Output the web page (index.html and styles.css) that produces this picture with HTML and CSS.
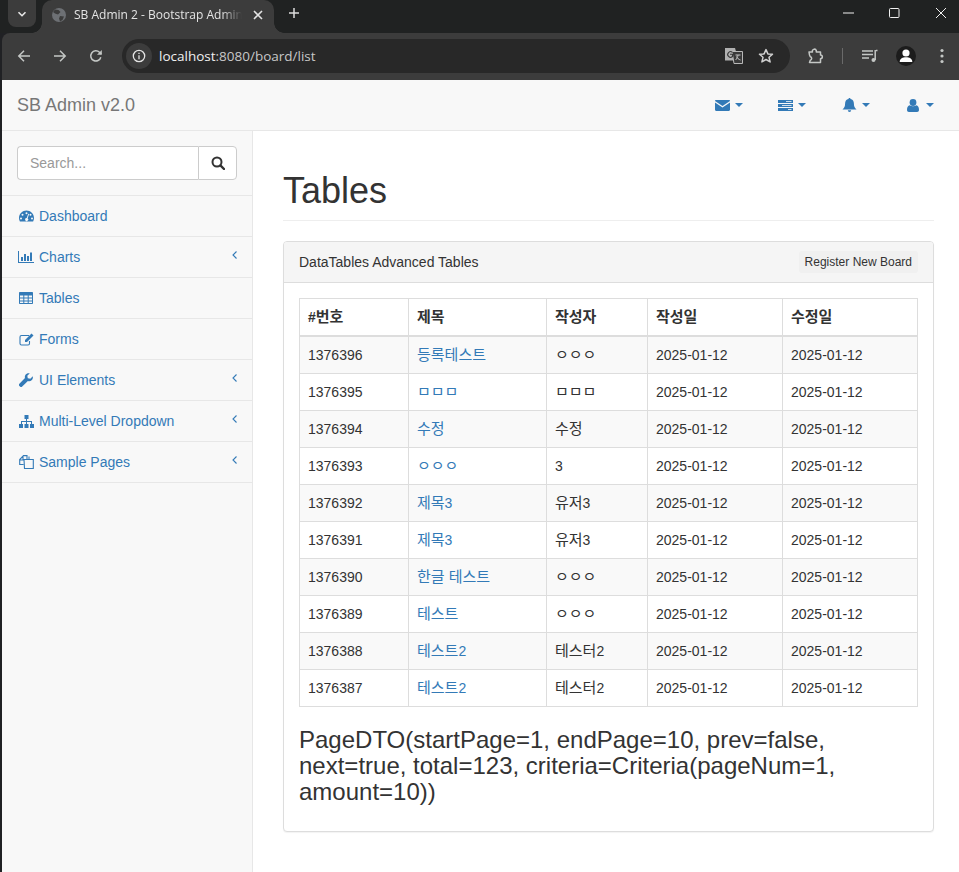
FILE: index.html
```html
<!DOCTYPE html>
<html lang="ko">
<head>
<meta charset="utf-8">
<title>SB Admin 2 - Bootstrap Admin Theme</title>
<link rel="stylesheet" href="styles.css">
</head>
<body>
<header class="chrome">
  <div class="tabstrip">
    <button class="tablist"><svg width="12" height="12" viewBox="0 0 12 12"><path d="M2.5 4.2 6 7.7l3.5-3.5" fill="none" stroke="#e8e8e8" stroke-width="1.6"/></svg></button>
    <div class="tab">
      <svg class="favicon" width="16" height="16" viewBox="0 0 16 16"><circle cx="8" cy="8" r="7" fill="#6d7074"/><path d="M4 2.5 7.500 3 9.500 5 7 7.500 4 6.500 2 5ZM9 9l4 .5-1.500 3.500L9 14.500 8 11.500Z" fill="#3c3c3c"/></svg>
      <span class="tabtitle">SB Admin 2 - Bootstrap Admin Theme</span>
      <svg class="tabclose" width="10" height="10" viewBox="0 0 10 10"><path d="M1 1l8 8M9 1 1 9" stroke="#e4e4e4" stroke-width="1.600"/></svg>
    </div>
    <svg class="newtab" width="12" height="12" viewBox="0 0 12 12"><path d="M6 1v10M1 6h10" stroke="#dcdcdc" stroke-width="1.500"/></svg>
    <div class="winctl">
      <svg width="12" height="12" viewBox="0 0 12 12"><path d="M0 6h11" stroke="#f0f0f0"/></svg>
      <svg width="12" height="12" viewBox="0 0 12 12"><rect x=".5" y="1.500" width="9.500" height="9" rx="1" fill="none" stroke="#f0f0f0"/></svg>
      <svg width="12" height="12" viewBox="0 0 12 12"><path d="M1 1l10 10M11 1 1 11" stroke="#f0f0f0"/></svg>
    </div>
  </div>
  <div class="toolbar">
    <svg width="14" height="14" viewBox="0 0 14 14"><path d="M13 7H2M7 1.800 1.800 7 7 12.200" fill="none" stroke="#c4c7c5" stroke-width="1.500"/></svg>
    <svg class="tool-fwd" width="14" height="14" viewBox="0 0 14 14"><path d="M1 7h11M7 1.800 12.200 7 7 12.200" fill="none" stroke="#c4c7c5" stroke-width="1.500"/></svg>
    <svg class="tool-reload" width="14" height="14" viewBox="0 0 14 14"><path d="M11.800 8.200A5.100 5.100 0 1 1 10.500 3.300L12.300 5" fill="none" stroke="#c4c7c5" stroke-width="1.500"/><path d="M12.800 1v4.800H8z" fill="#c4c7c5"/></svg>
    <div class="omnibox">
      <span class="infochip"><svg width="14" height="14" viewBox="0 0 14 14"><circle cx="7" cy="7" r="5.700" fill="none" stroke="#e3e3e3" stroke-width="1.300"/><path d="M7 6.200v4M7 3.700v1.300" stroke="#e3e3e3" stroke-width="1.300"/></svg></span>
      <span class="url"><span class="host">localhost</span>:8080/board/list</span>
      <svg class="translate" width="18" height="16" viewBox="0 0 18 16"><path d="M0 0h10l1 3.500 0 9H0z" fill="#b0b0b0"/><path d="M7 3.500h10.500v12H9z" fill="#3a3a3a" stroke="#b8b8b8"/><path d="M7.500 4.500A2.800 2.800 0 1 0 7.500 8.500V6.300H5" fill="none" stroke="#3a3a3a" stroke-width="1.100"/><path d="M10.500 7h5M13 7c-.2 2-1.200 4-2.500 5M11.500 8.500c.6 1.600 2.300 3 4 3.500" fill="none" stroke="#c4c4c4"/></svg>
      <svg class="star" width="16" height="16" viewBox="0 0 16 16"><path d="M8 1.600l1.900 4.300 4.600.4-3.500 3 1.100 4.600L8 11.500l-4.100 2.400L5 9.300l-3.500-3 4.600-.4z" fill="none" stroke="#d0d0d0" stroke-width="1.500" stroke-linejoin="round"/></svg>
    </div>
    <svg class="tool-ext" width="16" height="16" viewBox="0 0 16 16"><path d="M1 4h3.500a2 2 0 0 1 3.800-1.500V4h4.200v3a1.800 1.800 0 0 1 0 3.700V14.500H1.500l.8-2.300a1.800 1.800 0 0 0 0-3.500L1.500 7z" fill="none" stroke="#c4c7c5" stroke-width="1.500" stroke-linejoin="round"/></svg>
    <span class="tool-sep"></span>
    <svg class="tool-media" width="16" height="14" viewBox="0 0 16 14"><path d="M0 2h11M0 5.500h11M0 9h7" stroke="#c4c7c5" stroke-width="1.300"/><path d="M14 1.500h1.500M13.200 1v10" stroke="#c4c7c5" stroke-width="1.500"/><circle cx="11.500" cy="11" r="2" fill="#c4c7c5"/></svg>
    <span class="avatar"><svg width="20" height="20" viewBox="0 0 20 20"><circle cx="10" cy="7" r="3.600" fill="#fff"/><path d="M3.700 16c0-3.300 3-4.700 6.300-4.700s6.300 1.400 6.300 4.700z" fill="#fff"/></svg></span>
    <svg class="tool-menu" width="4" height="16" viewBox="0 0 4 16"><circle cx="2" cy="2.500" r="1.600" fill="#c4c7c5"/><circle cx="2" cy="8" r="1.600" fill="#c4c7c5"/><circle cx="2" cy="13.500" r="1.600" fill="#c4c7c5"/></svg>
  </div>
</header>

<div class="viewport">
  <nav class="navbar">
    <a class="brand">SB Admin v2.0</a>
    <div class="toplinks">
      <a class="toplink"><svg class="ti" width="15" height="11" viewBox="0 0 15 11"><path d="M1.200 0h12.600c.7 0 1.200.4 1.200.9L7.500 6.100 0 .9C0 .4.500 0 1.200 0z"/><path d="M0 2.400 7.500 7.500 15 2.400V9.800c0 .7-.5 1.200-1.200 1.200H1.200C.5 11 0 10.500 0 9.800z"/></svg><i class="caret"></i></a>
      <a class="toplink tasks"><svg class="ti" width="15" height="11" viewBox="0 0 15 11"><path d="M0 0h15v3H0zM0 4h15v3H0zM0 8h15v3H0z"/><path d="M8 1.500h5.500M4 5.500h9.500M10 9.500h3.500" stroke="#f8f8f8" stroke-width=".8"/></svg><i class="caret"></i></a>
      <a class="toplink bell"><svg class="ti" width="15" height="14" viewBox="0 0 15 14"><path d="M7.500 0c.6 0 1 .4 1 1 2.300.5 3.400 2.300 3.400 4.500 0 3 .8 4.300 2.600 6H.5c1.800-1.700 2.600-3 2.600-6 0-2.200 1.100-4 3.400-4.500 0-.6.400-1 1-1z"/><path d="M5.800 12.300h3.400a1.700 1.700 0 0 1-3.400 0z"/></svg><i class="caret"></i></a>
      <a class="toplink userlink"><svg class="ti" width="12" height="13" viewBox="0 0 12 13"><circle cx="6" cy="3.500" r="3.400"/><path d="M2.700 6.300C4.500 7.700 7.500 7.700 9.300 6.300 11 6.600 12 8.300 12 11c0 1.200-.8 2-1.900 2H1.900C.8 13 0 12.200 0 11c0-2.700 1-4.400 2.700-4.700z"/></svg><i class="caret"></i></a>
    </div>
  </nav>
  <div class="layout">
    <aside class="sidebar">
      <div class="search">
        <div class="inputgroup">
          <span class="searchinput">Search...</span>
          <span class="searchbtn"><svg width="14" height="14" viewBox="0 0 14 14"><circle cx="6" cy="6" r="4.500" fill="none" stroke="#333" stroke-width="2"/><path d="M9.400 9.400 13 13" stroke="#333" stroke-width="2.400" stroke-linecap="round"/></svg></span>
        </div>
      </div>
      <a class="menuitem"><span class="mi"><svg width="15" height="12" viewBox="0 0 15 12"><path fill-rule="evenodd" d="M7.500 .5C3.400.5 0 3.800 0 8c0 1.300.3 2.400.9 3.500h13.200c.6-1.100.9-2.200.9-3.500C15 3.800 11.600.5 7.500.5zM7.500 2.200a1 1 0 1 1 0 2 1 1 0 0 1 0-2zM3.500 3.800a1 1 0 1 1 0 2 1 1 0 0 1 0-2zM11.500 3.800a1 1 0 1 1 0 2 1 1 0 0 1 0-2zM2 7.500a1 1 0 1 1 0 2 1 1 0 0 1 0-2zM13 7.500a1 1 0 1 1 0 2 1 1 0 0 1 0-2zM9.300 3.800l.8.300-1.500 4.300a1.500 1.500 0 1 1-.9-.3z"/></svg></span>Dashboard</a>
      <a class="menuitem"><span class="mi"><svg width="16" height="12" viewBox="0 0 16 12"><path d="M0 0h1v11h15v1H0zM3 6h2v4H3zM6 3h2v7H6zM9 5h2v5H9zM12 1.500h2V10h-2z"/></svg></span>Charts<svg class="chev" width="5" height="8" viewBox="0 0 5 8"><path d="M4.500 .5 1 4l3.500 3.500" fill="none" stroke="#337ab7" stroke-width="1.100"/></svg></a>
      <a class="menuitem"><span class="mi"><svg width="14" height="12" viewBox="0 0 14 12"><path fill-rule="evenodd" d="M1 0h12c.6 0 1 .4 1 1v10c0 .6-.4 1-1 1H1c-.6 0-1-.4-1-1V1c0-.6.4-1 1-1zM1 3.500v2h3.300v-2zM5.300 3.500v2h3.400v-2zM9.700 3.500v2H13v-2zM1 6.500v2h3.300v-2zM5.300 6.500v2h3.400v-2zM9.700 6.500v2H13v-2zM1 9.500V11h3.300V9.500zM5.300 9.500V11h3.400V9.500zM9.700 9.500V11H13V9.500z"/></svg></span>Tables</a>
      <a class="menuitem"><span class="mi"><svg width="15" height="13" viewBox="0 0 15 13"><path d="M10 2.500H2.500c-.8 0-1.500.7-1.500 1.500v6.500c0 .8.700 1.500 1.500 1.500H9c.8 0 1.500-.7 1.500-1.500V8" fill="none" stroke="#337ab7" stroke-width="1.100"/><path d="M12.500.5 14.500 2.500 8 9H6V7z"/></svg></span>Forms</a>
      <a class="menuitem"><span class="mi"><svg width="14" height="14" viewBox="0 0 14 14"><path d="M13.800 3.200c.3 1.800-.2 3.200-1.200 4.100-1 .9-2.400 1.100-3.700.7L3.200 13.600a1.500 1.500 0 0 1-2.200 0l-.6-.6a1.500 1.500 0 0 1 0-2.200L6 5.100c-.4-1.300-.2-2.700.7-3.700C7.700.4 9 0 10.800.2L8.300 2.700l.5 2.500 2.500.5z"/></svg></span>UI Elements<svg class="chev" width="5" height="8" viewBox="0 0 5 8"><path d="M4.500 .5 1 4l3.500 3.500" fill="none" stroke="#337ab7" stroke-width="1.100"/></svg></a>
      <a class="menuitem"><span class="mi"><svg width="15" height="13" viewBox="0 0 15 13"><path d="M5.500 0h4v4H8v2h5v3h2v4h-4V9h1V7H8v2h1.500v4h-4V9H7V7H3v2h1v4H0V9h2V6h5V4H5.500z"/></svg></span>Multi-Level Dropdown<svg class="chev" width="5" height="8" viewBox="0 0 5 8"><path d="M4.500 .5 1 4l3.500 3.500" fill="none" stroke="#337ab7" stroke-width="1.100"/></svg></a>
      <a class="menuitem"><span class="mi"><svg width="15" height="14" viewBox="0 0 15 14"><path d="M5 4.500H14.300V13.500H5.500zM4.500 9.500H.7V4.500L4.500.6H8V4.500M4 1.500V5H1M10 5V1.500" fill="none" stroke="#337ab7" stroke-width="1.100"/></svg></span>Sample Pages<svg class="chev" width="5" height="8" viewBox="0 0 5 8"><path d="M4.500 .5 1 4l3.500 3.500" fill="none" stroke="#337ab7" stroke-width="1.100"/></svg></a>
    </aside>
    <main class="content">
      <h1 class="pagetitle">Tables</h1>
      <section class="panel">
        <div class="panelhead">
          <span>DataTables Advanced Tables</span>
          <button class="regbtn">Register New Board</button>
        </div>
        <div class="panelbody">
          <table class="boardtable">
            <colgroup>
              <col class="c1"><col class="c2"><col class="c3"><col class="c4"><col class="c5">
            </colgroup>
            <thead>
              <tr><th>#<span class="ko">번호</span></th><th><span class="ko">제목</span></th><th><span class="ko">작성자</span></th><th><span class="ko">작성일</span></th><th><span class="ko">수정일</span></th></tr>
            </thead>
            <tbody>
              <tr><td>1376396</td><td><a class="ko">등록테스트</a></td><td><span class="ko">ㅇㅇㅇ</span></td><td>2025-01-12</td><td>2025-01-12</td></tr>
              <tr><td>1376395</td><td><a class="ko">ㅁㅁㅁ</a></td><td><span class="ko">ㅁㅁㅁ</span></td><td>2025-01-12</td><td>2025-01-12</td></tr>
              <tr><td>1376394</td><td><a class="ko">수정</a></td><td><span class="ko">수정</span></td><td>2025-01-12</td><td>2025-01-12</td></tr>
              <tr><td>1376393</td><td><a class="ko">ㅇㅇㅇ</a></td><td>3</td><td>2025-01-12</td><td>2025-01-12</td></tr>
              <tr><td>1376392</td><td><a><span class="ko">제목</span>3</a></td><td><span class="ko">유저</span>3</td><td>2025-01-12</td><td>2025-01-12</td></tr>
              <tr><td>1376391</td><td><a><span class="ko">제목</span>3</a></td><td><span class="ko">유저</span>3</td><td>2025-01-12</td><td>2025-01-12</td></tr>
              <tr><td>1376390</td><td><a class="ko">한글 테스트</a></td><td><span class="ko">ㅇㅇㅇ</span></td><td>2025-01-12</td><td>2025-01-12</td></tr>
              <tr><td>1376389</td><td><a class="ko">테스트</a></td><td><span class="ko">ㅇㅇㅇ</span></td><td>2025-01-12</td><td>2025-01-12</td></tr>
              <tr><td>1376388</td><td><a><span class="ko">테스트</span>2</a></td><td><span class="ko">테스터</span>2</td><td>2025-01-12</td><td>2025-01-12</td></tr>
              <tr><td>1376387</td><td><a><span class="ko">테스트</span>2</a></td><td><span class="ko">테스터</span>2</td><td>2025-01-12</td><td>2025-01-12</td></tr>
            </tbody>
          </table>
          <h3 class="pagedto">PageDTO(startPage=1, endPage=10, prev=false, next=true, total=123, criteria=Criteria(pageNum=1, amount=10))</h3>
        </div>
      </section>
    </main>
  </div>
</div>
</body>
</html>
```
FILE: styles.css
```css
* { box-sizing: border-box; }
html, body { height: 100%; }
body {
  margin: 0;
  height: 872px;
  overflow: hidden;
  display: flex;
  flex-direction: column;
  background: #202124;
  font-family: "Liberation Sans", "Noto Sans CJK KR", sans-serif;
  font-size: 14px;
  line-height: 20px;
  color: #333;
}
a { color: #337ab7; text-decoration: none; }

/* browser chrome */
.chrome { height: 80px; flex: none; font-family: "Open Sans", "Noto Sans", sans-serif; }
.tabstrip {
  height: 33px;
  display: flex;
  align-items: flex-start;
  padding-left: 8px;
  background: #202222;
}
.tablist {
  width: 28px;
  height: 27px;
  margin: 0;
  padding: 0;
  border: 0;
  border-radius: 0 0 8px 8px;
  background: #3c3c3c;
  display: flex;
  align-items: center;
  justify-content: center;
}
.tab {
  position: relative;
  width: 232px;
  height: 33px;
  margin-left: 6px;
  padding: 0 10px 3px 9px;
  display: flex;
  align-items: center;
  background: #3c3c3c;
  border-radius: 10px 10px 0 0;
  color: #e4e4e4;
  font-size: 12px;
}
.tab::before, .tab::after {
  content: "";
  position: absolute;
  bottom: 0;
  width: 10px;
  height: 10px;
}
.tab::before {
  right: 100%;
  background: radial-gradient(circle at 0 0, transparent 9.5px, #3c3c3c 10px);
}
.tab::after {
  left: 100%;
  background: radial-gradient(circle at 100% 0, transparent 9.5px, #3c3c3c 10px);
}
.favicon { flex: none; }
.tabtitle {
  width: 168px;
  margin-left: 7px;
  overflow: hidden;
  white-space: nowrap;
  -webkit-mask-image: linear-gradient(to right, #000 88%, transparent);
  mask-image: linear-gradient(to right, #000 88%, transparent);
}
.tabclose { margin-left: 11px; }
.newtab { margin: 7px 0 0 14px; }
.winctl {
  margin-left: auto;
  display: flex;
  gap: 34px;
  padding: 7px 12px 0 0;
}
.toolbar {
  height: 47px;
  margin-left: 2px;
  padding: 6px 0 7px 15px;
  display: flex;
  align-items: center;
  background: #3c3c3c;
  border-radius: 8px 0 0 0;
}
.tool-fwd { margin-left: 22px; }
.tool-reload { margin-left: 22px; }
.omnibox {
  width: 668px;
  height: 34px;
  margin-left: 19px;
  padding: 0 16px 0 4px;
  display: flex;
  align-items: center;
  background: #282828;
  border-radius: 17px;
}
.infochip {
  width: 26px;
  height: 26px;
  flex: none;
  border-radius: 50%;
  background: #3c3c3c;
  display: flex;
  align-items: center;
  justify-content: center;
}
.url { margin-left: 7px; color: #c7c7c7; font-size: 13.5px; }
.host { color: #f0f0f0; }
.translate { margin-left: auto; }
.star { margin-left: 15px; }
.tool-ext { margin-left: 18px; }
.tool-sep { width: 1px; height: 16px; margin-left: 18px; background: #6a6a6a; }
.tool-media { margin-left: 19px; }
.avatar {
  width: 20px;
  height: 20px;
  margin-left: 18px;
  border-radius: 50%;
  background: #1c1c1c;
  overflow: hidden;
}
.avatar svg { display: block; }
.tool-menu { margin-left: 24px; }

/* page */
.viewport {
  flex: 1;
  min-height: 0;
  margin-left: 2px;
  display: flex;
  flex-direction: column;
  background: #fff;
}
.navbar {
  height: 51px;
  flex: none;
  display: flex;
  align-items: center;
  justify-content: space-between;
  padding: 0 25px 0 15px;
  background: #f8f8f8;
  border-bottom: 1px solid #e7e7e7;
}
.brand { color: #777; font-size: 18px; }
.toplinks { display: flex; gap: 35px; }
.toplink { display: flex; align-items: center; gap: 5px; fill: #337ab7; }
.tasks { margin-right: 1px; }
.bell { margin-right: 2px; }
.userlink { gap: 7px; }
.ti { display: block; }
.caret {
  width: 0;
  height: 0;
  border-top: 4px solid #337ab7;
  border-left: 4px solid transparent;
  border-right: 4px solid transparent;
}
.layout { flex: 1; min-height: 0; display: flex; }
.sidebar {
  width: 251px;
  flex: none;
  background: #f8f8f8;
  border-right: 1px solid #e7e7e7;
}
.search { padding: 15px; border-bottom: 1px solid #e7e7e7; }
.inputgroup { display: flex; height: 34px; }
.searchinput {
  width: 183px;
  padding: 6px 12px;
  background: #fff;
  border: 1px solid #ccc;
  border-right: 0;
  border-radius: 4px 0 0 4px;
  color: #999;
}
.searchbtn {
  width: 39px;
  display: flex;
  align-items: center;
  justify-content: center;
  background: #fff;
  border: 1px solid #ccc;
  border-radius: 0 4px 4px 0;
}
.menuitem {
  height: 41px;
  padding: 10px 15px;
  display: flex;
  align-items: center;
  border-bottom: 1px solid #e7e7e7;
  fill: #337ab7;
}
.mi {
  width: 22px;
  flex: none;
  display: flex;
  justify-content: center;
  padding-right: 4px;
}
.chev { margin: -4px 0 0 auto; }

.content { flex: 1; min-width: 0; padding: 0 25px 0 30px; background: #fff; }
.pagetitle {
  margin: 40px 0 20px;
  padding-bottom: 9px;
  border-bottom: 1px solid #eee;
  font-size: 36px;
  font-weight: 500;
  line-height: 1.1;
  color: #333;
}
.panel { border: 1px solid #ddd; border-radius: 4px; box-shadow: 0 1px 1px rgba(0,0,0,.05); background: #fff; }
.panelhead {
  height: 41px;
  padding: 0 15px;
  display: flex;
  align-items: center;
  justify-content: space-between;
  background: #f5f5f5;
  border-bottom: 1px solid #ddd;
  border-radius: 3px 3px 0 0;
}
.regbtn {
  height: 22px;
  padding: 0 6px;
  border: 0;
  border-radius: 3px;
  background: #f0f0f0;
  color: #333;
  font: 12px/18px "Liberation Sans", sans-serif;
}
.panelbody { padding: 15px; }
.boardtable { width: 618px; table-layout: fixed; border-collapse: collapse; background: #fff; }
.c1 { width: 109px; }
.c2 { width: 138px; }
.c3 { width: 101px; }
.c4 { width: 135px; }
.c5 { width: 135px; }
.boardtable th, .boardtable td {
  padding: 8px;
  border: 1px solid #ddd;
  text-align: left;
  line-height: 20px;
  vertical-align: top;
}
.boardtable thead th { border-bottom-width: 2px; font-weight: 700; }
.boardtable tbody tr:nth-child(odd) { background: #f9f9f9; }
.ko { font-size: 15px; line-height: 1; }
.pagedto { margin: 20px 0 10px; font-size: 24px; font-weight: 500; line-height: 1.1; color: #333; }
```
